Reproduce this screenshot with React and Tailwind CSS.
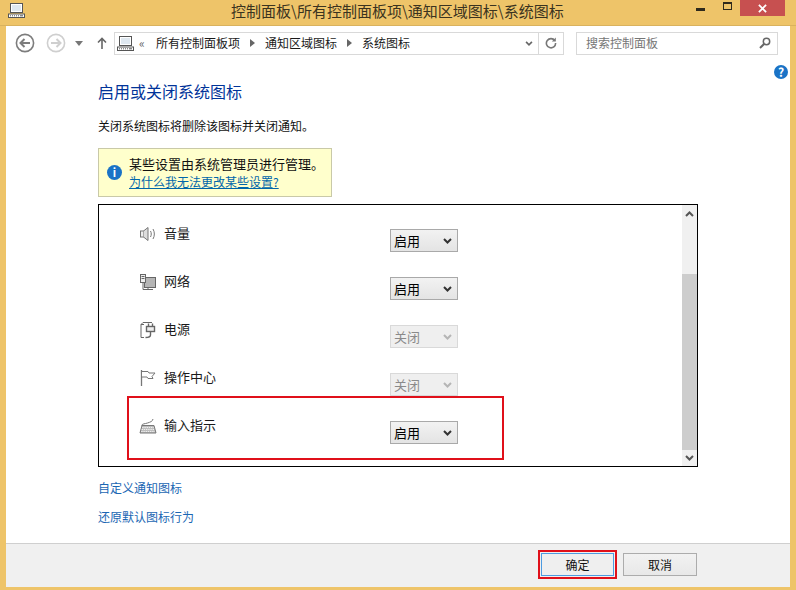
const FONT = 'font-["Microsoft_YaHei","Noto_Sans_CJK_SC",sans-serif]';

function PC({ className }) {
  return (
    <svg viewBox="0 0 17 15" className={className} fill="none">
      <rect x="2.5" y="0.5" width="12" height="9" fill="#fff" stroke="#555" />
      <rect x="4" y="2" width="9" height="6" fill="#dfe8f0" />
      <rect x="0.5" y="11" width="16" height="3.5" fill="#fff" stroke="#555" />
      <path d="M2 12.8h1M4 12.8h1M6 12.8h1M8 12.8h1M10 12.8h1M12 12.8h3" stroke="#555" />
    </svg>
  );
}

function Chevron({ color = "#444", className = "w-[9px] h-[6px]" }) {
  return (
    <svg viewBox="0 0 9 6" className={className} fill="none">
      <path d="M1 1l3.5 3.5L8 1" stroke={color} strokeWidth="2" />
    </svg>
  );
}

function Crumb() {
  return (
    <svg viewBox="0 0 5 8" className="w-[5px] h-[8px]">
      <path d="M0 0l5 4-5 4z" fill="#666" />
    </svg>
  );
}

function NavCircle({ color, fill, bg }) {
  return (
    <svg viewBox="0 0 20 20" className="w-[20px] h-[20px]" fill="none">
      <circle cx="10" cy="10" r="8.6" stroke={color} strokeWidth="1.6" fill={bg} />
      <path d={fill} stroke={color} strokeWidth="2" />
    </svg>
  );
}

function Select({ value, disabled }) {
  return (
    <div
      className={
        disabled
          ? "w-[68px] h-[23px] flex items-center justify-between pl-[3px] pr-[5px] border border-[#d9d9d9] bg-[#efefef] text-[13px] text-[#8a8a8a]"
          : "w-[68px] h-[23px] flex items-center justify-between pl-[3px] pr-[5px] border border-[#a9a9a9] bg-gradient-to-b from-[#f2f2f2] to-[#e4e4e4] text-[13px] text-black"
      }
    >
      <span>{value}</span>
      <Chevron color={disabled ? "#b5b5b5" : "#333"} />
    </div>
  );
}

const ICONS = {
  sound: (
    <svg viewBox="0 0 18 18" className="w-[18px] h-[18px]" fill="none" stroke="#777">
      <rect x="1.5" y="6" width="3" height="6" fill="#eee" />
      <path d="M4.5 6L9 2.5v13L4.5 12" fill="#ddd" />
      <path d="M11.5 6c1 2 1 4 0 6M14 4c1.8 3 1.8 7 0 10" />
    </svg>
  ),
  net: (
    <svg viewBox="0 0 18 18" className="w-[18px] h-[18px]" fill="none" stroke="#666">
      <rect x="5.5" y="4.5" width="11" height="10" fill="#b5b5b5" />
      <rect x="1.5" y="1.5" width="5" height="8" fill="#eee" />
      <path d="M2.5 3.5h3M2.5 5.5h3M4 9.5v7h10M9 14.5v2" />
    </svg>
  ),
  power: (
    <svg viewBox="0 0 18 18" className="w-[18px] h-[18px]" fill="none" stroke="#666">
      <path d="M5 16.5H2V3.5h3M2 3.5l2-2h9" />
      <rect x="7.5" y="5.5" width="8" height="5" fill="#eee" strokeWidth="1.4" />
      <path d="M9.5 2.5v3M13.5 2.5v3M11.5 10.5v3.5c0 2-2 2.5-5 2.5" strokeWidth="1.4" />
    </svg>
  ),
  flag: (
    <svg viewBox="0 0 18 18" className="w-[18px] h-[18px]" fill="none" stroke="#777">
      <path d="M2.5 1v16" strokeWidth="1.3" />
      <path d="M3 2.5h6l1 1.5h6l-3 3.5 1 2H9L8 8H3" fill="#fff" />
    </svg>
  ),
  kbd: (
    <svg viewBox="0 0 18 18" className="w-[18px] h-[18px]" fill="none" stroke="#777">
      <path d="M2.5 8.5c1-2 3-1.5 6-2.5s5-1.5 5.5-4" />
      <path d="M3 8.5h12l2 7.5H1z" fill="#bdbdbd" />
      <path d="M3.2 10.5h11.6M2.6 12.5h12.8M2.2 14.5h13.6" stroke="#eee" strokeDasharray="1.4 0.8" />
    </svg>
  ),
};

const ROWS = [
  ["sound", "音量", "启用", false],
  ["net", "网络", "启用", false],
  ["power", "电源", "关闭", true],
  ["flag", "操作中心", "关闭", true],
  ["kbd", "输入指示", "启用", false],
];

function Row({ icon, label, value, disabled }) {
  return (
    <div className="h-[48px] flex items-start pl-[40px]">
      <div className="w-[25px] mt-[3px] shrink-0">{ICONS[icon]}</div>
      <div className="w-[226px] shrink-0 text-[13px] leading-[18px] mt-[2px] text-[#1a1a1a]">{label}</div>
      <div className="mt-[7px]">
        <Select value={value} disabled={disabled} />
      </div>
    </div>
  );
}

export default function App() {
  return (
    <div className={`${FONT} w-[796px] h-[590px] overflow-hidden flex flex-col bg-[#eec469]`}>
      {/* Title bar */}
      <div className="h-[26px] shrink-0 flex items-start border-b border-[#d9b25e]">
        <PC className="w-[17px] h-[15px] ml-[8px] mt-[3px] shrink-0" />
        <div className="w-[206px] shrink-0" />
        <div className="text-[15px] leading-[22px] text-[#3a3320] whitespace-nowrap w-[465px] shrink-0">
          控制面板\所有控制面板项\通知区域图标\系统图标
        </div>
        <div className="w-[9px] h-[3px] bg-[#2f2a1c] mt-[8px] shrink-0" />
        <div className="w-[9px] h-[8px] border border-[#2f2a1c] border-t-2 ml-[18px] mt-[2px] shrink-0" />
        <div className="w-[45px] h-[16px] ml-[8px] bg-[#c75050] flex items-center justify-center shrink-0">
          <svg viewBox="0 0 10 10" className="w-[9px] h-[9px]" fill="none">
            <path d="M1 1l8 8M9 1l-8 8" stroke="#fff" strokeWidth="2" />
          </svg>
        </div>
      </div>

      {/* Client area */}
      <div className="flex-1 mx-[6px] mb-[3px] bg-white flex flex-col min-h-0">
        {/* Navigation bar */}
        <div className="h-[24px] mt-[5px] shrink-0 flex items-center">
          <div className="ml-[9px]">
            <NavCircle color="#7d7d7d" bg="#fff" fill="M15 10H6M9.5 6l-4 4 4 4" />
          </div>
          <div className="ml-[11px]">
            <NavCircle color="#cfcfcf" bg="#fff" fill="M5 10h9M10.5 6l4 4-4 4" />
          </div>
          <svg viewBox="0 0 8 5" className="w-[8px] h-[5px] ml-[9px]">
            <path d="M0 0h8L4 5z" fill="#777" />
          </svg>
          <svg viewBox="0 0 10 12" className="w-[10px] h-[12px] ml-[14px]" fill="none">
            <path d="M5 12V2M1 5.5L5 1.5l4 4" stroke="#666" strokeWidth="1.6" />
          </svg>
          <div className="ml-[7px] w-[450px] h-[23px] flex items-center border border-[#d9d9d9] text-[12px] text-[#1a1a1a]">
            <PC className="w-[17px] h-[15px] ml-[2px] shrink-0" />
            <span className="ml-[5px] w-[17px] text-[12px] leading-none text-[#666]">«</span>
            <span className="whitespace-nowrap">所有控制面板项</span>
            <span className="ml-[10px]"><Crumb /></span>
            <span className="ml-[10px] whitespace-nowrap">通知区域图标</span>
            <span className="ml-[10px]"><Crumb /></span>
            <span className="ml-[10px] whitespace-nowrap">系统图标</span>
            <span className="ml-[115px]"><Chevron color="#666" className="w-[8px] h-[5px]" /></span>
            <div className="ml-[5px] w-px h-full bg-[#d9d9d9]" />
            <div className="flex-1 flex items-center justify-center">
              <svg viewBox="0 0 12 12" className="w-[12px] h-[12px]" fill="none">
                <path d="M9.8 3.6A4.6 4.6 0 1 0 10.6 6" stroke="#777" strokeWidth="1.6" />
                <path d="M10.8 0.5v4h-4z" fill="#777" />
              </svg>
            </div>
          </div>
          <div className="ml-[12px] w-[202px] h-[23px] flex items-center justify-between pl-[9px] pr-[6px] border border-[#d9d9d9] text-[12px] text-[#767676]">
            <span>搜索控制面板</span>
            <svg viewBox="0 0 12 12" className="w-[12px] h-[12px]" fill="none">
              <circle cx="7.5" cy="4.5" r="3.2" stroke="#666" strokeWidth="1.5" />
              <path d="M5 7l-4 4" stroke="#666" strokeWidth="2" />
            </svg>
          </div>
        </div>

        {/* Help */}
        <div className="flex justify-end pr-[2px] mt-[10px] shrink-0 h-[14px]">
          <div className="w-[14px] h-[14px] rounded-full bg-[#1a73c6] flex items-center justify-center text-white text-[12px] font-bold leading-none">
            ?
          </div>
        </div>

        {/* Content */}
        <div className="flex-1 min-h-0 pl-[92px] pr-[92px] flex flex-col">
          <h1 className="text-[16px] leading-[24px] font-normal text-[#003399]">启用或关闭系统图标</h1>
          <p className="mt-[14px] text-[12px] leading-[18px] text-[#111]">关闭系统图标将删除该图标并关闭通知。</p>
          <div className="mt-[13px] w-[234px] h-[49px] border border-[#c9c9a8] bg-[#ffffcc] flex items-center pl-[8px]">
            <div className="w-[15px] h-[15px] rounded-full bg-[#1a73c6] flex items-center justify-center text-white text-[11px] font-bold leading-none shrink-0">
              i
            </div>
            <div className="ml-[7px]">
              <div className="text-[13px] leading-[18px] text-[#111] whitespace-nowrap">某些设置由系统管理员进行管理。</div>
              <div className="text-[12px] leading-[18px] text-[#0066aa] underline whitespace-nowrap">为什么我无法更改某些设置?</div>
            </div>
          </div>

          {/* List box */}
          <div className="relative mt-[7px] h-[263px] border border-black flex shrink-0">
            <div className="flex-1 pt-[17px]">
              {ROWS.map(([icon, label, value, disabled]) => (
                <Row key={label} icon={icon} label={label} value={value} disabled={disabled} />
              ))}
            </div>
            <div className="w-[15px] flex flex-col bg-[#f0f0f0]">
              <div className="h-[18px] flex items-center justify-center">
                <Chevron color="#555" className="w-[9px] h-[6px] rotate-180" />
              </div>
              <div className="h-[51px]" />
              <div className="flex-1 bg-[#cdcdcd]" />
              <div className="h-[16px] flex items-center justify-center">
                <Chevron color="#555" />
              </div>
            </div>
            <div className="absolute left-[28px] top-[191px] w-[377px] h-[64px] border-2 border-[#e0101a]" />
          </div>

          <a className="mt-[12px] text-[12px] leading-[18px] text-[#1a66b3]">自定义通知图标</a>
          <a className="mt-[11px] text-[12px] leading-[18px] text-[#1a66b3]">还原默认图标行为</a>
        </div>

        {/* Footer */}
        <div className="h-[44px] shrink-0 border-t border-[#cfcfcf] bg-[#f0f0f0] flex items-start justify-end pr-[93px] pt-[6px]">
          <div className="border-[2px] border-[#e0101a] p-px">
            <div className="w-[73px] h-[23px] border border-[#4d9be0] bg-[#efefef] flex items-center justify-center text-[12px] text-[#111]">
              确定
            </div>
          </div>
          <div className="ml-[6px] mt-[3px] w-[74px] h-[23px] border border-[#acacac] bg-gradient-to-b from-[#f2f2f2] to-[#e8e8e8] flex items-center justify-center text-[12px] text-[#111]">
            取消
          </div>
        </div>
      </div>
    </div>
  );
}
